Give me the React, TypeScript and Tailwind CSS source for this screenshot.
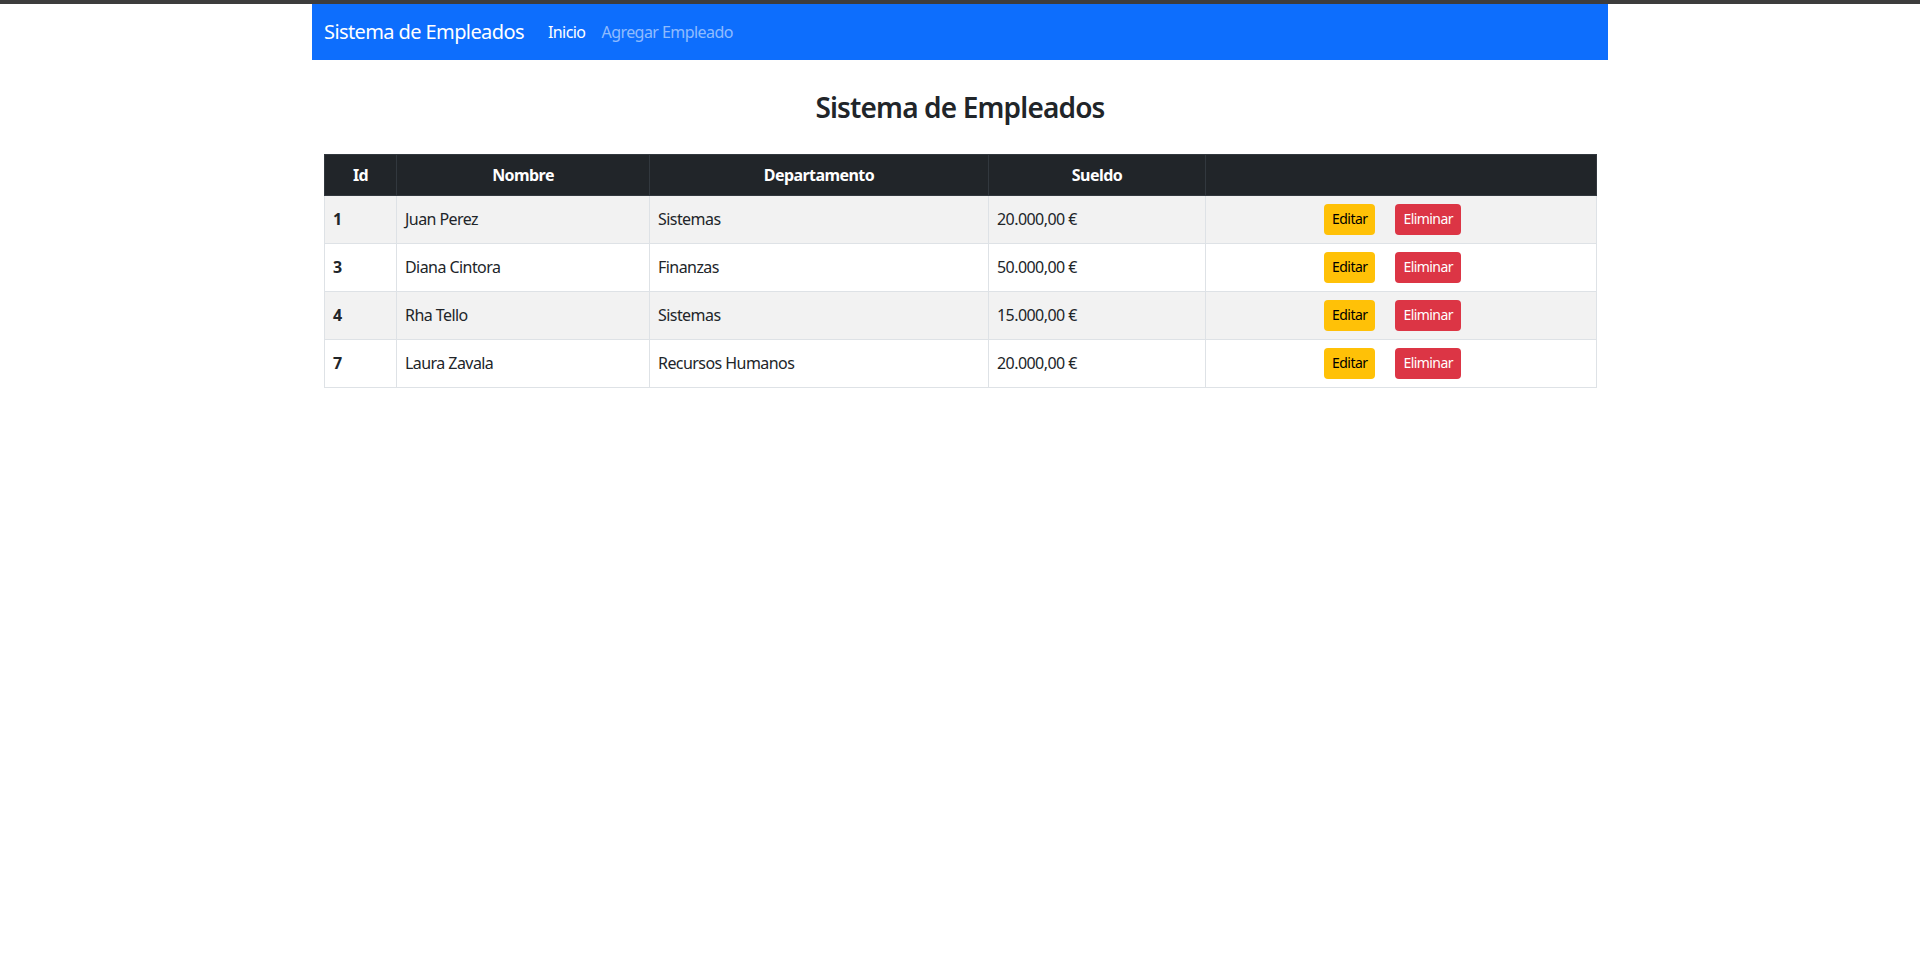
import * as React from 'react';

interface Empleado {
	id: number;
	nombre: string;
	departamento: string;
	sueldo: string;
}

const empleados: Empleado[] = [
	{ id: 1, nombre: 'Juan Perez', departamento: 'Sistemas', sueldo: '20.000,00 €' },
	{ id: 3, nombre: 'Diana Cintora', departamento: 'Finanzas', sueldo: '50.000,00 €' },
	{ id: 4, nombre: 'Rha Tello', departamento: 'Sistemas', sueldo: '15.000,00 €' },
	{ id: 7, nombre: 'Laura Zavala', departamento: 'Recursos Humanos', sueldo: '20.000,00 €' },
];

const Navbar = () => (
	<nav className="flex h-14 items-center bg-[#0d6efd] px-3">
		<a className="mr-4 text-[20px] leading-[30px] tracking-[-0.03em] text-white">Sistema de Empleados</a>
		<a className="px-2 text-base leading-6 text-white">Inicio</a>
		<a className="px-2 text-base leading-6 text-[rgba(255,255,255,0.55)]">Agregar Empleado</a>
	</nav>
);

const EmpleadosTable = () => (
	<table className="w-full table-fixed border-collapse text-base leading-6 text-[#212529]">
		<colgroup>
			<col className="w-[72px]" />
			<col className="w-[253px]" />
			<col className="w-[339px]" />
			<col className="w-[217px]" />
			<col className="w-[391px]" />
		</colgroup>
		<thead>
			<tr className="h-[41px] bg-[#212529] text-white">
				<th className="border border-[#32383e] px-2 text-center font-bold">Id</th>
				<th className="border border-[#32383e] px-2 text-center font-bold">Nombre</th>
				<th className="border border-[#32383e] px-2 text-center font-bold">Departamento</th>
				<th className="border border-[#32383e] px-2 text-center font-bold">Sueldo</th>
				<th className="border border-[#32383e] px-2" />
			</tr>
		</thead>
		<tbody>
			{empleados.map((e, i) => (
				<tr key={e.id} className={i % 2 === 0 ? 'h-12 bg-[#f2f2f2]' : 'h-12 bg-white'}>
					<td className="border border-[#dee2e6] px-2 align-middle font-bold">{e.id}</td>
					<td className="border border-[#dee2e6] px-2 align-middle">{e.nombre}</td>
					<td className="border border-[#dee2e6] px-2 align-middle">{e.departamento}</td>
					<td className="border border-[#dee2e6] px-2 align-middle">{e.sueldo}</td>
					<td className="border border-[#dee2e6] px-2 align-middle">
						<div className="flex justify-center gap-5 pr-[17px]">
							<button className="h-[31px] rounded-[4px] bg-[#ffc107] px-2 text-sm text-black">
								Editar
							</button>
							<button className="h-[31px] rounded-[4px] bg-[#dc3545] px-2 text-sm text-white">
								Eliminar
							</button>
						</div>
					</td>
				</tr>
			))}
		</tbody>
	</table>
);

export default function App() {
	return (
		<div className="min-h-screen bg-white font-['Noto_Sans',sans-serif] tracking-[-0.035em]">
			<div className="h-1 bg-[#3d3d3d]" />
			<div className="mx-auto w-[1296px]">
				<Navbar />
				<main className="px-3">
					<h3 className="mt-[31px] mb-[29px] text-center text-[28px] leading-[1.2] font-semibold tracking-[-0.03em] text-[#212529]">
						Sistema de Empleados
					</h3>
					<EmpleadosTable />
				</main>
			</div>
		</div>
	);
}
